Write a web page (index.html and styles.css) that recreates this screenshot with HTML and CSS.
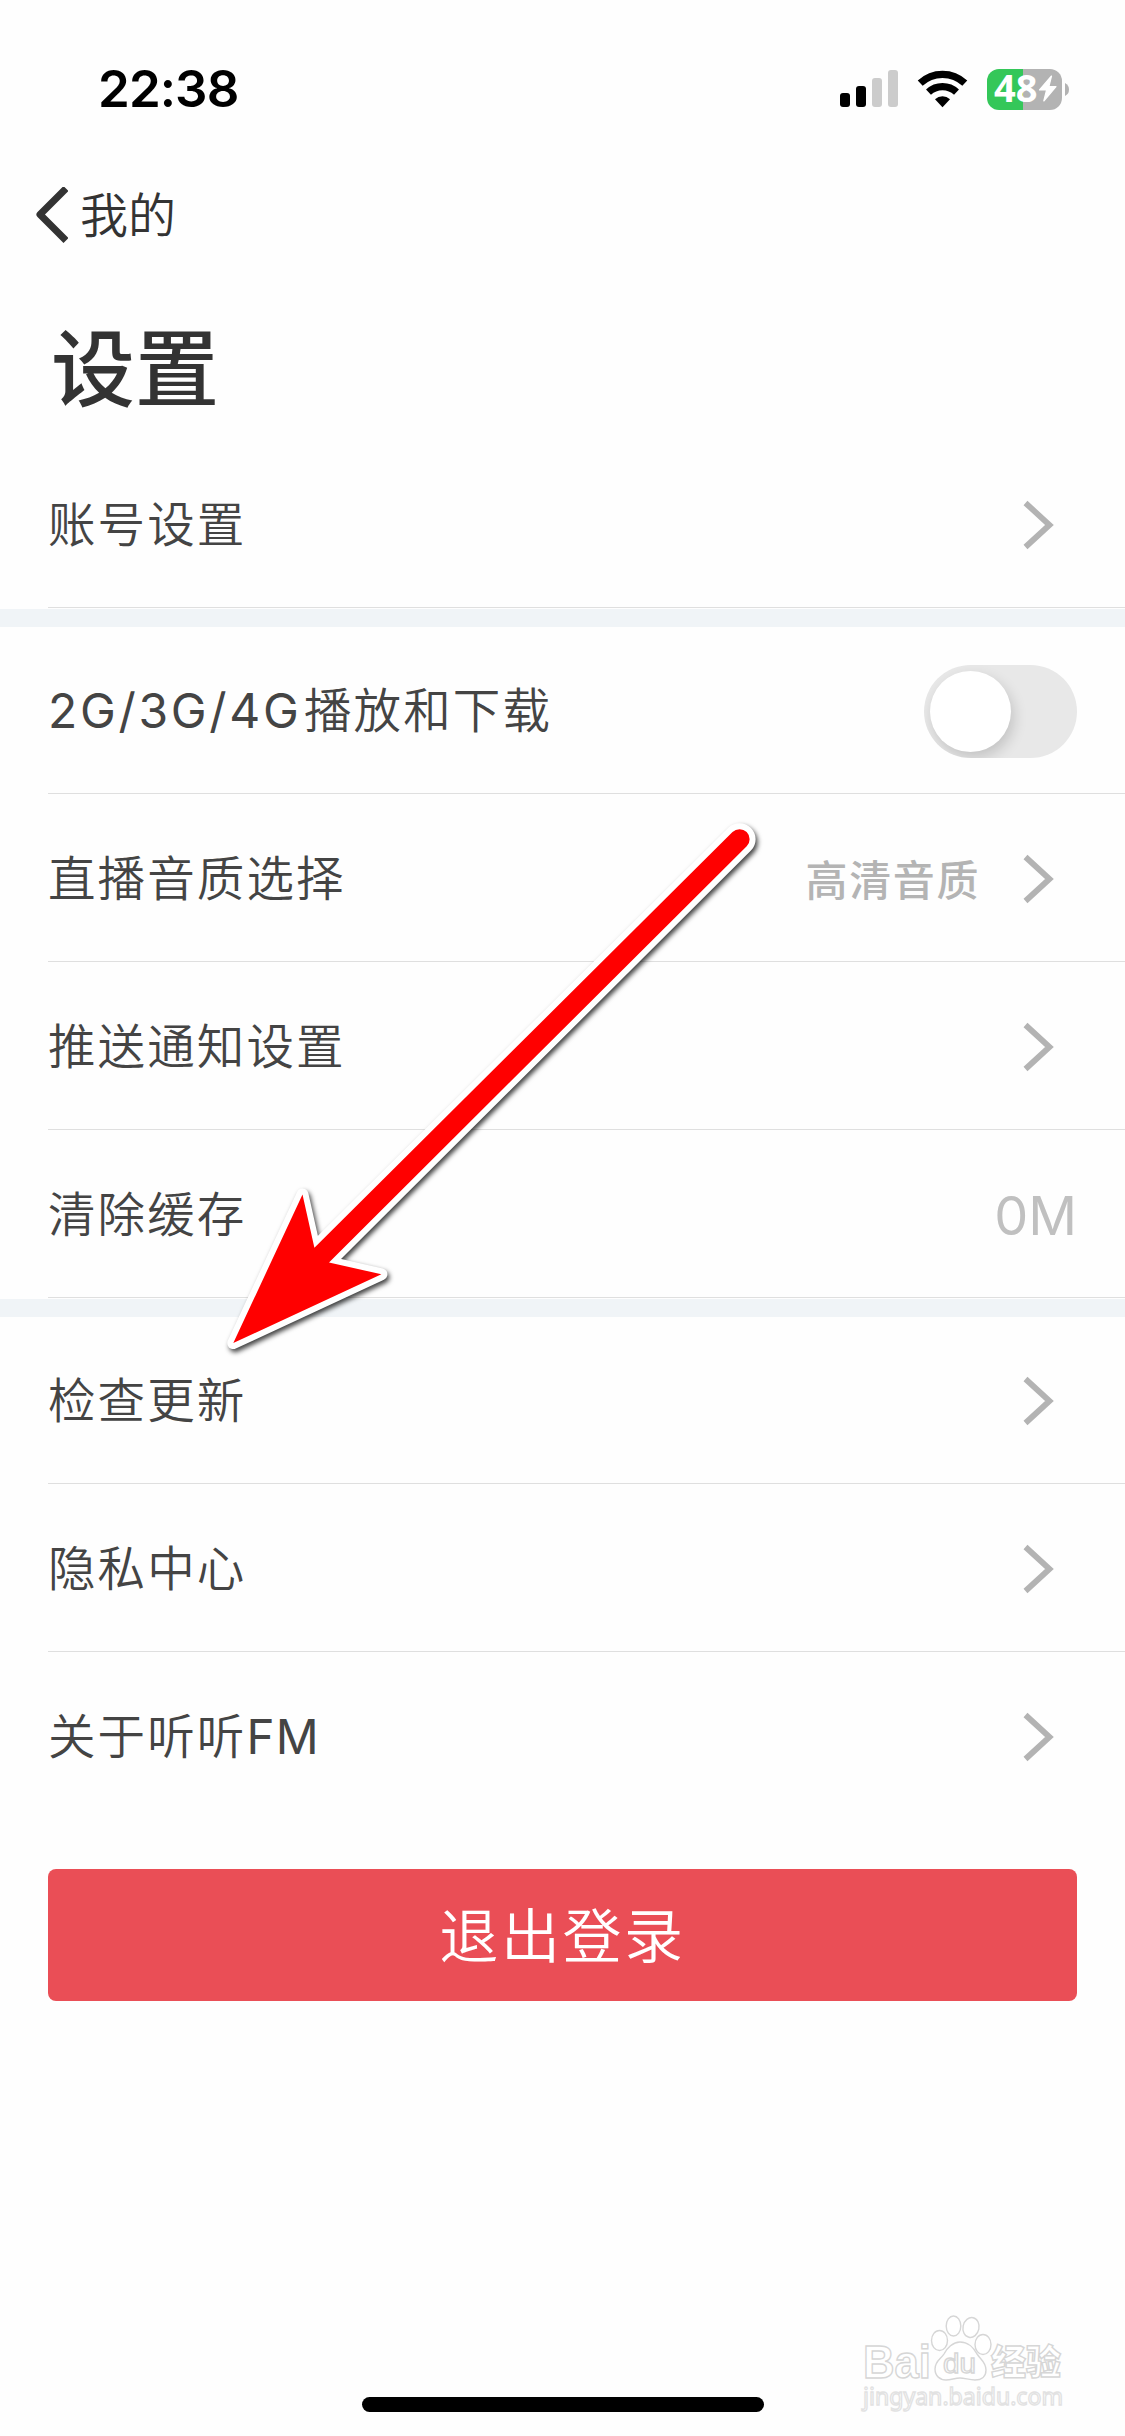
FILE: index.html
```html
<!DOCTYPE html>
<html lang="zh-CN">
<head>
<meta charset="utf-8">
<title>设置</title>
<link rel="stylesheet" href="styles.css">
</head>
<body>
<div class="screen">
  <header class="status">
    <span class="time">22:38</span>
    <div class="indicators">
      <svg class="signal" width="58" height="38" viewBox="0 0 58 38">
        <rect x="0" y="23" width="10" height="14" rx="3"/>
        <rect x="16" y="16" width="10" height="21" rx="3"/>
        <rect x="32" y="8" width="10" height="29" rx="3" fill="#ccc"/>
        <rect x="48" y="0" width="10" height="37" rx="3" fill="#ccc"/>
      </svg>
      <svg class="wifi" width="52" height="38" viewBox="0 0 52 38">
        <path d="M3.2 13.2A32.5 32.5 0 0 1 47.8 13.2" fill="none" stroke="#000" stroke-width="7.2"/>
        <path d="M11.5 22.2A20.5 20.5 0 0 1 39.5 22.2" fill="none" stroke="#000" stroke-width="7.2"/>
        <path d="M18 29.2A11.3 11.3 0 0 1 33 29.2L25.5 37.2Z"/>
      </svg>
      <div class="battery">
        <div class="cell"><span class="level">48</span>
          <svg class="bolt" width="20" height="30" viewBox="0 0 20 30"><path d="M13.5 2L1.5 16H8.6L5.8 27L18 12.6H10.9Z" fill="#fff" stroke="#fff" stroke-width="1.2" stroke-linejoin="round"/></svg>
        </div>
        <svg class="nub" width="4" height="13" viewBox="0 0 4 13"><path d="M0 0Q4 2 4 6.5T0 13Z" fill="#b3b3b3"/></svg>
      </div>
    </div>
  </header>
  <nav class="nav">
    <svg class="back" width="34" height="56" viewBox="0 0 34 56"><path d="M29.5 4L6 27.5L29.5 51" fill="none" stroke="#333" stroke-width="7" stroke-linecap="square" stroke-linejoin="round"/></svg>
    <span class="back-label">我的</span>
  </nav>
  <h1 class="title">设置</h1>

  <section class="group">
    <div class="row"><span class="label">账号设置</span><svg class="chev" viewBox="0 0 32 50"><path d="M3.5 3L27.5 25L3.5 47"/></svg></div>
  </section>
  <section class="group">
    <div class="row"><span class="label"><span class="network">2G/3G/4G</span>播放和下载</span><span class="toggle"><span class="knob"></span></span></div>
    <div class="row"><span class="label">直播音质选择</span><span class="value">高清音质</span><svg class="chev" viewBox="0 0 32 50"><path d="M3.5 3L27.5 25L3.5 47"/></svg></div>
    <div class="row"><span class="label">推送通知设置</span><svg class="chev" viewBox="0 0 32 50"><path d="M3.5 3L27.5 25L3.5 47"/></svg></div>
    <div class="row"><span class="label">清除缓存</span><span class="size">0M</span></div>
  </section>
  <section class="group">
    <div class="row"><span class="label">检查更新</span><svg class="chev" viewBox="0 0 32 50"><path d="M3.5 3L27.5 25L3.5 47"/></svg></div>
    <div class="row"><span class="label">隐私中心</span><svg class="chev" viewBox="0 0 32 50"><path d="M3.5 3L27.5 25L3.5 47"/></svg></div>
    <div class="row"><span class="label">关于听听<span class="brand">FM</span></span><svg class="chev" viewBox="0 0 32 50"><path d="M3.5 3L27.5 25L3.5 47"/></svg></div>
  </section>
  <button class="logout">退出登录</button>

  <footer class="footer">
    <svg class="watermark" width="220" height="110" viewBox="855 2305 220 110">
      <g fill="#fff" stroke="#d6d6d6" stroke-width="1.4">
        <text class="wm-brand" x="863" y="2378" font-size="46" textLength="68" lengthAdjust="spacingAndGlyphs">Bai</text>
        <ellipse cx="939.5" cy="2340.5" rx="8" ry="10"/>
        <ellipse cx="953.5" cy="2326" rx="7.3" ry="10"/>
        <ellipse cx="971" cy="2327.5" rx="8" ry="10" transform="rotate(12 971 2327.5)"/>
        <ellipse cx="983" cy="2344.5" rx="8" ry="10"/>
        <path d="M960 2342C968 2342 974 2348 977 2354C981 2360 986 2362 986 2370C986 2377 981 2380 975 2380C969 2380 965 2378 960 2378C955 2378 951 2380 946 2380C940 2380 935 2376 935 2369C935 2361 941 2359 944 2354C947 2348 953 2342 960 2342Z"/>
        <text class="wm-du" x="943" y="2373" font-size="28" textLength="33" lengthAdjust="spacingAndGlyphs">du</text>
        <text class="wm-cn" x="991" y="2375" font-size="35" textLength="70">经验</text>
        <text class="wm-url" x="863" y="2405" font-size="24" textLength="200" lengthAdjust="spacingAndGlyphs">jingyan.baidu.com</text>
      </g>
    </svg>
    <div class="home-bar"></div>
  </footer>

  <svg class="pointer" width="560" height="560" viewBox="210 810 560 560">
    <path class="halo" d="M732.5 832.1A10 10 0 0 1 746.7 846.3L329 1262.4L381.4 1274.3L233.3 1343.1L302.5 1194.5L314.4 1247.8Z"/>
    <path d="M732.5 832.1A10 10 0 0 1 746.7 846.3L329 1262.4L381.4 1274.3L233.3 1343.1L302.5 1194.5L314.4 1247.8Z" fill="#f00"/>
  </svg>
</div>
</body>
</html>
```
FILE: styles.css
```css
* { box-sizing: border-box; }
body { margin: 0; background: #fefefe; }
.screen {
  position: relative;
  width: 1125px;
  height: 2436px;
  display: flex;
  flex-direction: column;
  background: #fefefe;
  font-family: Inter, "Noto Sans CJK SC", sans-serif;
  color: #444;
  overflow: hidden;
}
.status {
  height: 178px;
  padding: 0 56px 0 98px;
  display: flex;
  justify-content: space-between;
  align-items: center;
}
.time { font-size: 51px; font-weight: 600; color: #000; line-height: 60px; letter-spacing: -0.9px; }
.indicators { display: flex; align-items: center; }
.wifi { margin-left: 19px; }
.battery { display: flex; align-items: center; gap: 3px; margin-left: 18px; }
.cell {
  width: 75px;
  height: 41px;
  border-radius: 12px;
  background: linear-gradient(90deg, #34c759 36px, #b3b3b3 36px);
  display: flex;
  align-items: center;
  padding-left: 7px;
}
.level { font: 700 38px/39px "Noto Sans", sans-serif; color: #fff; padding-bottom: 3px; }
.bolt { margin-left: 1px; }
.nav { height: 73px; display: flex; align-items: center; padding-left: 34px; }
.back-label { font-size: 48px; font-weight: 350; color: #333; margin-left: 12px; padding-top: 3px; line-height: 60px; }
.title { margin: 0; height: 190px; padding: 59px 0 0 51px; font-size: 84px; line-height: 120px; font-weight: 500; color: #333; }
.group + .group { border-top: 18px solid #f0f4f7; }
.row {
  height: 168px;
  margin-left: 48px;
  padding-right: 48px;
  display: flex;
  align-items: center;
  background: linear-gradient(#dfdfdf, #dfdfdf) 0 166px / 100% 1px no-repeat;
}
.group:last-of-type .row:last-child { background: none; }
.label { flex: 1; font-size: 47.5px; letter-spacing: 2.1px; font-weight: 350; line-height: 70px; }
.network { display: inline-block; width: 256px; font-size: 48px; font-weight: 400; letter-spacing: 2.7px; }
.brand { font-weight: 400; letter-spacing: 1.2px; }
.chev { width: 32px; height: 50px; margin-right: 23px; }
.chev path { fill: none; stroke: #b3b3b3; stroke-width: 5.8px; }
.value { font-size: 42px; font-weight: 500; letter-spacing: 1.6px; color: #b4b4b4; margin-right: 42px; padding-bottom: 3px; }
.size { font-size: 54px; font-weight: 400; color: #c0c0c0; }
.toggle { width: 153px; height: 93px; border-radius: 47px; background: #e8e8e8; padding: 6px; overflow: hidden; }
.knob { display: block; width: 81px; height: 81px; border-radius: 50%; background: #fff; box-shadow: 3px 6px 14px rgba(0, 0, 0, .16); }
.logout {
  height: 132px;
  margin: 48px 48px 0;
  padding: 0 0 4px;
  border: 0;
  border-radius: 8px;
  background: #ea4e56;
  color: #fff;
  font: 350 59px/128px "Noto Sans CJK SC", sans-serif;
  letter-spacing: 2.6px;
}
.footer { flex: 1; display: flex; flex-direction: column; justify-content: flex-end; align-items: center; padding-bottom: 24px; }
.watermark { align-self: flex-end; margin: 0 50px -18px 0; }
.wm-brand { font-family: "Liberation Sans", sans-serif; font-weight: 700; }
.wm-du { font-family: "Liberation Sans", sans-serif; }
.wm-cn { font-family: "Noto Sans CJK SC", sans-serif; font-weight: 900; }
.wm-url { font-family: "Noto Sans", sans-serif; stroke: #e2e2e2; }
.home-bar { width: 402px; height: 15px; border-radius: 8px; background: #000; }
.pointer { position: absolute; left: 210px; top: 810px; }
.halo { fill: #fff; stroke: #fff; stroke-width: 12px; stroke-linejoin: round; filter: drop-shadow(2px 3px 2.5px rgba(0, 0, 0, .75)); }
```
